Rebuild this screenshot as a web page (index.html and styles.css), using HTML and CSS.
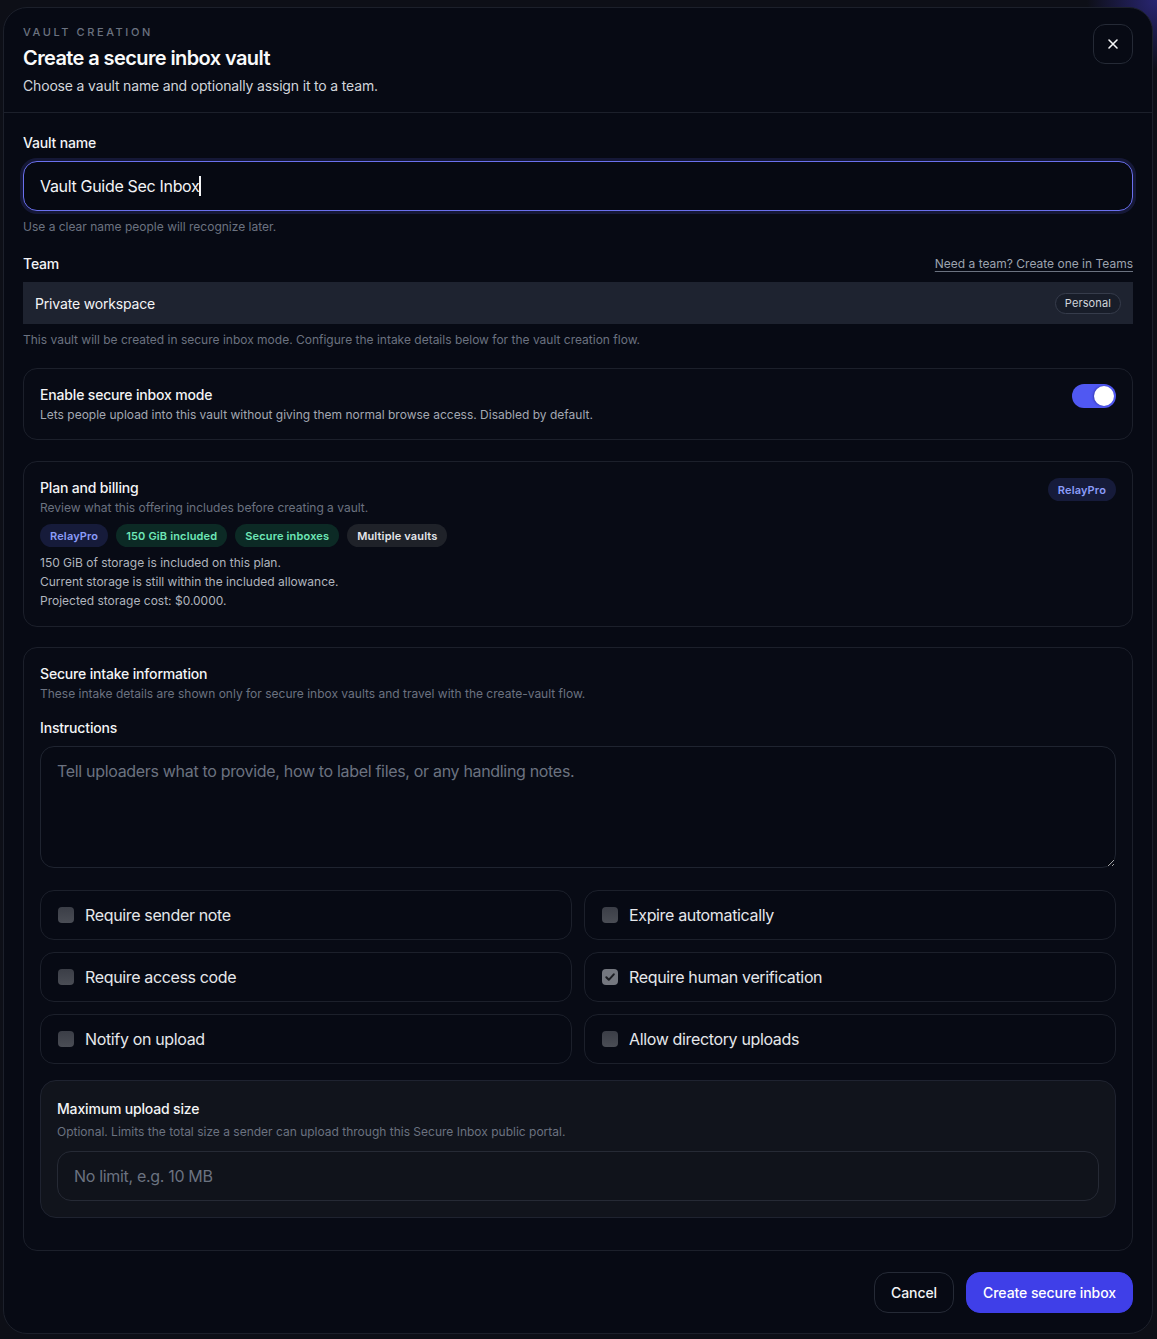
FILE: index.html
```html
<!DOCTYPE html>
<html lang="en">
<head>
<meta charset="utf-8">
<title>Create a secure inbox vault</title>
<link rel="stylesheet" href="styles.css">
</head>
<body>
<div class="modal">
  <header class="modal-header">
    <div class="heading">
      <div class="eyebrow">Vault creation</div>
      <h1 class="title">Create a secure inbox vault</h1>
      <p class="subtitle">Choose a vault name and optionally assign it to a team.</p>
    </div>
    <button class="close-btn" aria-label="Close">
      <svg width="12" height="12" viewBox="0 0 12 12" fill="none"><path d="M2 2L10 10M10 2L2 10" stroke="#f3f4f6" stroke-width="1.6" stroke-linecap="round"/></svg>
    </button>
  </header>

  <div class="modal-body">
    <section class="field field-name">
      <label class="label">Vault name</label>
      <div class="text-input focused"><span class="value">Vault Guide Sec Inbox</span><span class="caret"></span></div>
      <p class="hint">Use a clear name people will recognize later.</p>
    </section>

    <section class="field">
      <div class="label-row">
        <label class="label">Team</label>
        <a class="link" href="#">Need a team? Create one in Teams</a>
      </div>
      <div class="select">
        <span>Private workspace</span>
        <span class="chip">Personal</span>
      </div>
      <p class="hint">This vault will be created in secure inbox mode. Configure the intake details below for the vault creation flow.</p>
    </section>

    <section class="card toggle-card">
      <div class="card-text">
        <div class="card-title">Enable secure inbox mode</div>
        <div class="card-desc light">Lets people upload into this vault without giving them normal browse access. Disabled by default.</div>
      </div>
      <span class="toggle"><span class="knob"></span></span>
    </section>

    <section class="card plan-card">
      <div class="plan-head">
        <div class="card-text">
          <div class="card-title">Plan and billing</div>
          <div class="card-desc">Review what this offering includes before creating a vault.</div>
        </div>
        <span class="badge badge-indigo">RelayPro</span>
      </div>
      <div class="badges">
        <span class="badge badge-indigo">RelayPro</span>
        <span class="badge badge-green">150 GiB included</span>
        <span class="badge badge-green">Secure inboxes</span>
        <span class="badge badge-gray">Multiple vaults</span>
      </div>
      <div class="plan-lines">
        <p>150 GiB of storage is included on this plan.</p>
        <p>Current storage is still within the included allowance.</p>
        <p>Projected storage cost: $0.0000.</p>
      </div>
    </section>

    <section class="card intake-card">
      <div class="card-title">Secure intake information</div>
      <div class="card-desc">These intake details are shown only for secure inbox vaults and travel with the create-vault flow.</div>
      <label class="label instructions-label">Instructions</label>
      <textarea class="textarea" placeholder="Tell uploaders what to provide, how to label files, or any handling notes."></textarea>

      <div class="options">
        <div class="option"><span class="check"></span><span>Require sender note</span></div>
        <div class="option"><span class="check"></span><span>Expire automatically</span></div>
        <div class="option"><span class="check"></span><span>Require access code</span></div>
        <div class="option"><span class="check checked"><svg width="12" height="12" viewBox="0 0 12 12" fill="none"><path d="M2.3 6.3L4.8 8.8L9.8 3.3" stroke="#1b1d22" stroke-width="2" stroke-linecap="round" stroke-linejoin="round"/></svg></span><span>Require human verification</span></div>
        <div class="option"><span class="check"></span><span>Notify on upload</span></div>
        <div class="option"><span class="check"></span><span>Allow directory uploads</span></div>
      </div>

      <div class="upload-card">
        <div class="card-title">Maximum upload size</div>
        <div class="upload-desc">Optional. Limits the total size a sender can upload through this Secure Inbox public portal.</div>
        <input class="plain-input" type="text" placeholder="No limit, e.g. 10 MB">
      </div>
    </section>
  </div>

  <footer class="modal-footer">
    <button class="btn btn-ghost">Cancel</button>
    <button class="btn btn-primary">Create secure inbox</button>
  </footer>
</div>
</body>
</html>
```

FILE: styles.css
```css
* { box-sizing: border-box; }

html, body {
  margin: 0;
  padding: 0;
  color-scheme: dark;
}

body {
  font-family: Inter, "Noto Sans", "Liberation Sans", sans-serif;
  color: #e5e7eb;
  background:
    radial-gradient(circle at 100% 0, rgba(64, 56, 190, 0.55), rgba(64, 56, 190, 0) 70px),
    #0d0f17;
  min-height: 1339px;
  padding: 7px 4px 5px 3px;
}

.modal {
  background: #070a14;
  border: 1px solid #1c202b;
  border-radius: 24px;
  overflow: hidden;
}

.modal-header {
  display: flex;
  justify-content: space-between;
  align-items: flex-start;
  padding: 16px 19px 16px 19px;
  border-bottom: 1px solid #1c202b;
}

.eyebrow {
  font-size: 11px;
  line-height: 16px;
  font-weight: 500;
  letter-spacing: 0.235em;
  text-transform: uppercase;
  color: #6b7280;
}

.title {
  margin: 4px 0 0;
  font-size: 20px;
  line-height: 28px;
  font-weight: 600;
  letter-spacing: -0.03em;
  color: #f9fafb;
}

.subtitle {
  margin: 4px 0 0;
  font-size: 14px;
  line-height: 20px;
  letter-spacing: -0.012em;
  color: #d1d5db;
}

.close-btn {
  width: 40px;
  height: 40px;
  border-radius: 12px;
  border: 1px solid #252a36;
  background: #070a14;
  display: flex;
  align-items: center;
  justify-content: center;
  padding: 0;
  cursor: pointer;
}

.modal-body {
  padding: 20px 19px 0;
  display: flex;
  flex-direction: column;
  gap: 20px;
}

.field { display: flex; flex-direction: column; }

.field-name .hint { line-height: 15px; }

.label {
  display: block;
  font-size: 14px;
  line-height: 20px;
  font-weight: 500;
  letter-spacing: -0.012em;
  color: #f3f4f6;
}

.label-row {
  display: flex;
  justify-content: space-between;
  align-items: center;
  height: 20px;
}

.link {
  font-size: 12px;
  line-height: 16px;
  color: #9ca3af;
  text-decoration: underline;
  text-underline-offset: 3px;
  text-decoration-color: #6b7280;
}

.text-input {
  margin-top: 8px;
  height: 50px;
  border-radius: 14px;
  border: 1px solid #2a2f3c;
  background: #060912;
  padding: 0 16px;
  display: flex;
  align-items: center;
  font-size: 16px;
  letter-spacing: -0.02em;
  color: #f3f4f6;
}

.text-input.focused {
  border-color: #6a70ee;
  box-shadow: 0 0 0 3px rgba(99, 102, 241, 0.16);
}

.caret {
  display: inline-block;
  width: 1.5px;
  height: 20px;
  background: #f3f4f6;
}

.hint {
  margin: 8px 0 0;
  font-size: 12px;
  line-height: 16px;
  color: #6b7280;
}

.select {
  margin-top: 8px;
  height: 42px;
  background: #1e2330;
  padding: 0 12px;
  display: flex;
  align-items: center;
  justify-content: space-between;
  font-size: 14px;
  letter-spacing: -0.012em;
  color: #f3f4f6;
}

.chip {
  height: 21px;
  padding: 0 9px;
  border-radius: 999px;
  border: 1px solid #363c4b;
  background: #181d29;
  font-size: 11px;
  line-height: 19px;
  letter-spacing: 0.01em;
  color: #d1d5db;
}

.card {
  border: 1px solid #1c202b;
  border-radius: 14px;
  background: #080b15;
  padding: 16px;
}

.plan-card { margin-top: 1px; }

.card-title {
  font-size: 14px;
  line-height: 20px;
  font-weight: 500;
  letter-spacing: -0.012em;
  color: #f3f4f6;
}

.card-desc {
  margin-top: 2px;
  font-size: 12px;
  line-height: 16px;
  color: #6b7280;
}

.card-desc.light { color: #a3a8b2; }

.toggle-card {
  display: flex;
  justify-content: space-between;
  align-items: flex-start;
}

.toggle {
  width: 44px;
  height: 24px;
  border-radius: 12px;
  background: #5058f2;
  display: flex;
  align-items: center;
  justify-content: flex-end;
  padding: 0 2px;
  margin-top: -1px;
}

.knob {
  width: 20px;
  height: 20px;
  border-radius: 50%;
  background: #ffffff;
  box-shadow: -1px 0 2px rgba(30, 30, 120, 0.5);
}

.plan-head {
  display: flex;
  justify-content: space-between;
  align-items: flex-start;
}

.badges {
  margin-top: 8px;
  display: flex;
  gap: 8px;
}

.badge {
  display: inline-flex;
  align-items: center;
  height: 23px;
  padding: 0 10px;
  border-radius: 999px;
  font-size: 11px;
  font-weight: 600;
  letter-spacing: 0.014em;
  white-space: nowrap;
}

.badge-indigo { background: #161b3a; color: #8b9cf8; }
.badge-green { background: #0c2a25; color: #6ee7b7; }
.badge-gray { background: #1f2229; color: #e5e7eb; }

.plan-lines { margin-top: 6px; }

.plan-lines p {
  margin: 0;
  font-size: 12px;
  line-height: 19px;
  color: #b0b5be;
}

.intake-card { padding-bottom: 32px; }

.instructions-label { margin-top: 16px; }

.textarea {
  display: block;
  width: 100%;
  margin-top: 8px;
  height: 122px;
  border-radius: 14px;
  border: 1px solid #1f2430;
  background: #070a14;
  padding: 12px 16px;
  font-family: inherit;
  font-size: 16px;
  line-height: 24px;
  letter-spacing: -0.02em;
  color: #e5e7eb;
  resize: vertical;
  outline: none;
}

.textarea::placeholder { color: #6b7280; }

.options {
  margin-top: 22px;
  display: grid;
  grid-template-columns: 1fr 1fr;
  gap: 12px;
}

.option {
  height: 50px;
  border: 1px solid #1c202b;
  border-radius: 14px;
  background: #070a14;
  display: flex;
  align-items: center;
  padding: 0 17px;
  gap: 11px;
  font-size: 16px;
  letter-spacing: -0.022em;
  color: #e5e7eb;
}

.check {
  width: 16px;
  height: 16px;
  border-radius: 4px;
  background: linear-gradient(#3b3e47, #4a4d55);
  display: inline-flex;
  align-items: center;
  justify-content: center;
  flex: none;
}

.check.checked { background: #74777f; }

.upload-card {
  margin-top: 16px;
  border: 1px solid #1f2330;
  border-radius: 16px;
  background: #11141c;
  padding: 18px 16px 16px;
}

.upload-desc {
  margin-top: 4px;
  font-size: 12px;
  line-height: 18px;
  color: #6b7280;
}

.plain-input {
  display: block;
  width: 100%;
  margin-top: 10px;
  height: 50px;
  border-radius: 14px;
  border: 1px solid #262a35;
  background: #10131b;
  padding: 0 16px;
  font-family: inherit;
  font-size: 16px;
  letter-spacing: -0.02em;
  color: #e5e7eb;
  outline: none;
}

.plain-input::placeholder { color: #6b7280; }

.modal-footer {
  display: flex;
  justify-content: flex-end;
  gap: 12px;
  padding: 21px 19px 20px;
}

.btn {
  height: 41px;
  border-radius: 14px;
  padding: 0 16px;
  font-family: inherit;
  font-size: 14px;
  font-weight: 500;
  letter-spacing: -0.005em;
  cursor: pointer;
}

.btn-ghost {
  background: #070a14;
  border: 1px solid #252a36;
  color: #f3f4f6;
}

.btn-primary {
  background: #3f3fe8;
  border: 1px solid #3f3fe8;
  color: #ffffff;
}
```
